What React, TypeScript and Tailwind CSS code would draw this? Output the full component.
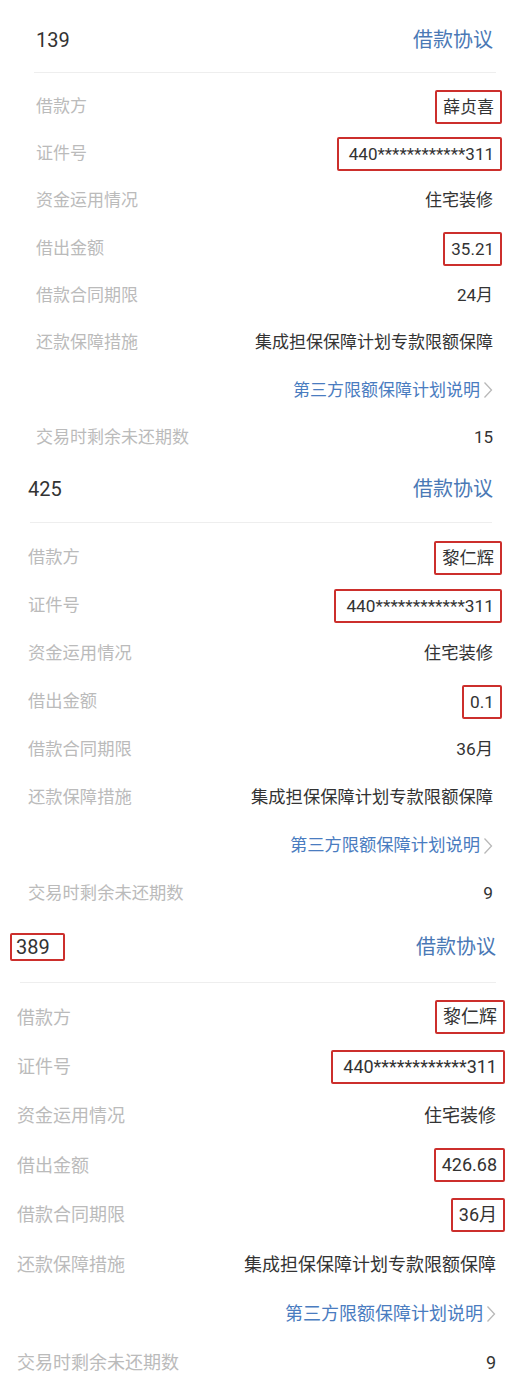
import React from 'react'

type Row = { label: string; value: string; boxed?: boolean }

type Loan = {
  id: string
  idBoxed?: boolean
  rows: Row[]
  remain: string
}

const FONT = { fontFamily: 'Roboto, "Noto Sans CJK SC", sans-serif' }

const loans: Loan[] = [
  {
    id: '139',
    rows: [
      { label: '借款方', value: '薛贞喜', boxed: true },
      { label: '证件号', value: '440************311', boxed: true },
      { label: '资金运用情况', value: '住宅装修' },
      { label: '借出金额', value: '35.21', boxed: true },
      { label: '借款合同期限', value: '24月' },
      { label: '还款保障措施', value: '集成担保保障计划专款限额保障' },
    ],
    remain: '15',
  },
  {
    id: '425',
    rows: [
      { label: '借款方', value: '黎仁辉', boxed: true },
      { label: '证件号', value: '440************311', boxed: true },
      { label: '资金运用情况', value: '住宅装修' },
      { label: '借出金额', value: '0.1', boxed: true },
      { label: '借款合同期限', value: '36月' },
      { label: '还款保障措施', value: '集成担保保障计划专款限额保障' },
    ],
    remain: '9',
  },
  {
    id: '389',
    idBoxed: true,
    rows: [
      { label: '借款方', value: '黎仁辉', boxed: true },
      { label: '证件号', value: '440************311', boxed: true },
      { label: '资金运用情况', value: '住宅装修' },
      { label: '借出金额', value: '426.68', boxed: true },
      { label: '借款合同期限', value: '36月', boxed: true },
      { label: '还款保障措施', value: '集成担保保障计划专款限额保障' },
    ],
    remain: '9',
  },
]

type Layout = {
  wrap: string
  header: string
  divider: string
  rows: string
  row: string
  text: string
}

const layouts: Layout[] = [
  {
    wrap: 'pl-[36px] pr-[28px]',
    header: 'pt-[26px] pb-[18px]',
    divider: 'ml-[-2px] mr-[-3px]',
    rows: 'pt-[10px]',
    row: 'h-[47.3px]',
    text: 'text-[17px]',
  },
  {
    wrap: 'pl-[28px] pr-[28px]',
    header: 'pt-[14px] pb-[19px]',
    divider: 'ml-[2px] mr-[1px]',
    rows: 'pt-[11px]',
    row: 'h-[47.9px]',
    text: 'text-[17.3px]',
  },
  {
    wrap: 'pl-[17px] pr-[25px]',
    header: 'pt-[15px] pb-[21px]',
    divider: 'ml-[3px] mr-[0px]',
    rows: 'pt-[10px]',
    row: 'h-[49.4px]',
    text: 'text-[18px]',
  },
]

function Chevron() {
  return (
    <svg width="10" height="18" viewBox="0 0 10 18" className="ml-[3px] shrink-0">
      <path d="M1.5 1.5 L8.5 9 L1.5 16.5" fill="none" stroke="#b8b8b8" strokeWidth="1.3" />
    </svg>
  )
}

function Value({ row }: { row: Row }) {
  if (!row.boxed) return <span className="text-[#333333]">{row.value}</span>
  const wide = row.value.length > 10
  return (
    <span
      className={`text-[#333333] border-[2.5px] border-[#cc2f2c] rounded-[2px] py-[5px] leading-[20px] mr-[-9px] ${
        wide ? 'pl-[10px] pr-[6px]' : 'px-[6px]'
      }`}
    >
      {row.value}
    </span>
  )
}

function LoanBlock({ loan, layout }: { loan: Loan; layout: Layout }) {
  return (
    <div className={layout.wrap}>
      <div className={`flex items-center justify-between leading-[28px] ${layout.header}`}>
        {loan.idBoxed ? (
          <span className="text-[20px] text-[#333333] border-[2.5px] border-[#cc2f2c] rounded-[2px] pl-[4px] pr-[13px] ml-[-7px] leading-[24px]">
            {loan.id}
          </span>
        ) : (
          <span className="text-[20px] text-[#333333]">{loan.id}</span>
        )}
        <span className="text-[20px] text-[#4a78b5]">借款协议</span>
      </div>
      <div className={`h-px bg-[#eeeeee] ${layout.divider}`} />
      <div className={`${layout.rows} ${layout.text}`}>
        {loan.rows.map((r) => (
          <div key={r.label} className={`flex items-center justify-between ${layout.row}`}>
            <span className="text-[#bbbbbb]">{r.label}</span>
            <Value row={r} />
          </div>
        ))}
        <div className={`flex items-center justify-end ${layout.row}`}>
          <span className="text-[#4a7cc0]">第三方限额保障计划说明</span>
          <Chevron />
        </div>
        <div className={`flex items-center justify-between ${layout.row}`}>
          <span className="text-[#bbbbbb]">交易时剩余未还期数</span>
          <span className="text-[#333333]">{loan.remain}</span>
        </div>
      </div>
    </div>
  )
}

export default function App() {
  return (
    <div className="w-[521px] h-[1396px] bg-white overflow-hidden" style={FONT}>
      {loans.map((l, i) => (
        <LoanBlock key={l.id} loan={l} layout={layouts[i]} />
      ))}
    </div>
  )
}
